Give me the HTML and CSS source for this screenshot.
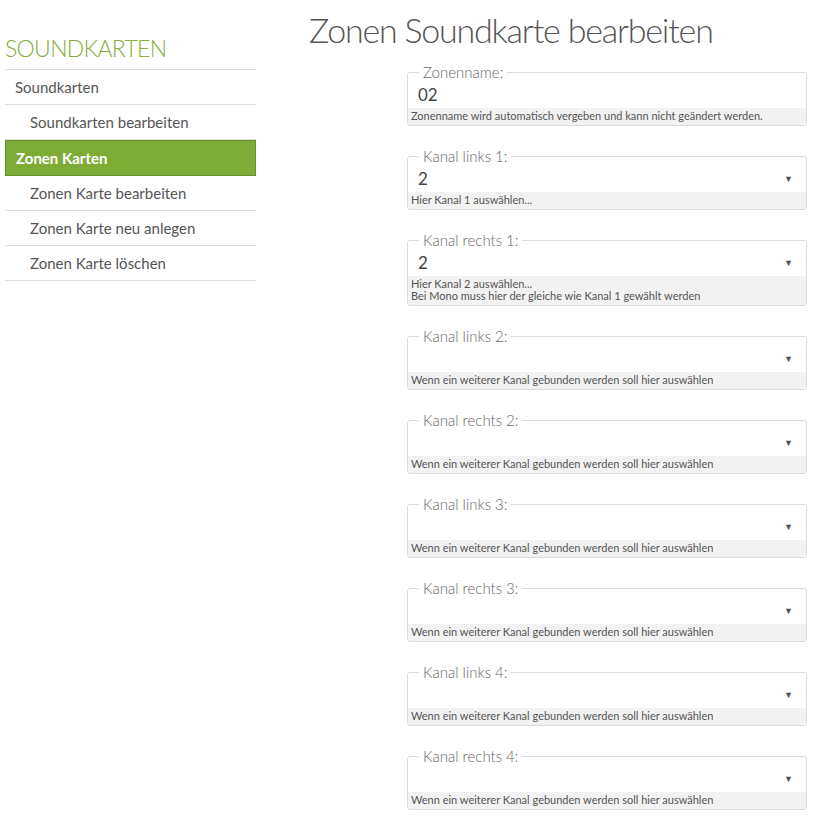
FILE: index.html
```html
<!DOCTYPE html>
<html lang="de">
<head>
<meta charset="utf-8">
<title>Zonen Soundkarte bearbeiten</title>
<link rel="stylesheet" href="styles.css">
</head>
<body>
<div class="page">
  <aside class="sidebar">
    <h2 class="side-title">SOUNDKARTEN</h2>
    <ul class="menu">
      <li class="item">Soundkarten</li>
      <li class="item sub">Soundkarten bearbeiten</li>
      <li class="item active">Zonen Karten</li>
      <li class="item sub">Zonen Karte bearbeiten</li>
      <li class="item sub">Zonen Karte neu anlegen</li>
      <li class="item sub">Zonen Karte löschen</li>
    </ul>
  </aside>
  <main class="main">
    <h1 class="title">Zonen Soundkarte bearbeiten</h1>
    <form class="form">
      <fieldset class="field">
        <legend>Zonenname:</legend>
        <div class="value">02</div>
        <div class="help">Zonenname wird automatisch vergeben und kann nicht geändert werden.</div>
      </fieldset>
      <fieldset class="field">
        <legend>Kanal links 1:</legend>
        <div class="value select">2<span class="arrow">▼</span></div>
        <div class="help">Hier Kanal 1 auswählen...</div>
      </fieldset>
      <fieldset class="field">
        <legend>Kanal rechts 1:</legend>
        <div class="value select">2<span class="arrow">▼</span></div>
        <div class="help">Hier Kanal 2 auswählen...<br>Bei Mono muss hier der gleiche wie Kanal 1 gewählt werden</div>
      </fieldset>
      <fieldset class="field">
        <legend>Kanal links 2:</legend>
        <div class="value select"><span class="arrow">▼</span></div>
        <div class="help">Wenn ein weiterer Kanal gebunden werden soll hier auswählen</div>
      </fieldset>
      <fieldset class="field">
        <legend>Kanal rechts 2:</legend>
        <div class="value select"><span class="arrow">▼</span></div>
        <div class="help">Wenn ein weiterer Kanal gebunden werden soll hier auswählen</div>
      </fieldset>
      <fieldset class="field">
        <legend>Kanal links 3:</legend>
        <div class="value select"><span class="arrow">▼</span></div>
        <div class="help">Wenn ein weiterer Kanal gebunden werden soll hier auswählen</div>
      </fieldset>
      <fieldset class="field">
        <legend>Kanal rechts 3:</legend>
        <div class="value select"><span class="arrow">▼</span></div>
        <div class="help">Wenn ein weiterer Kanal gebunden werden soll hier auswählen</div>
      </fieldset>
      <fieldset class="field">
        <legend>Kanal links 4:</legend>
        <div class="value select"><span class="arrow">▼</span></div>
        <div class="help">Wenn ein weiterer Kanal gebunden werden soll hier auswählen</div>
      </fieldset>
      <fieldset class="field">
        <legend>Kanal rechts 4:</legend>
        <div class="value select"><span class="arrow">▼</span></div>
        <div class="help">Wenn ein weiterer Kanal gebunden werden soll hier auswählen</div>
      </fieldset>
    </form>
  </main>
</div>
</body>
</html>
```

FILE: styles.css
```css
* { box-sizing: border-box; }
html, body { margin: 0; padding: 0; background: #fff; }
body {
  font-family: Lato, "Open Sans", "Liberation Sans", sans-serif;
  color: #555;
}
.page {
  display: flex;
  align-items: flex-start;
}
.sidebar {
  width: 256px;
  padding-left: 5px;
  flex: none;
}
.side-title {
  margin: 27px 0 0;
  font-size: 23px;
  font-weight: 300;
  line-height: 42px;
  color: #86ad3b;
  letter-spacing: -0.7px;
}
.menu {
  list-style: none;
  margin: 0;
  padding: 0;
  border-top: 1px solid #ddd;
}
.item {
  height: 35px;
  line-height: 34px;
  font-size: 15px;
  font-weight: 400;
  color: #555;
  padding-left: 10px;
  border-bottom: 1px solid #ddd;
}
.item.sub { padding-left: 25px; }
.item.active {
  height: 36px;
  background: #7dab35;
  border: 1px solid #65912a;
  color: #fff;
  font-weight: 700;
  padding-left: 10px;
  line-height: 34px;
}
.main {
  margin-left: 53px;
  flex: 1;
}
.title {
  margin: 8px 0 0;
  font-size: 34px;
  font-weight: 300;
  line-height: 44px;
  color: #555;
  letter-spacing: -1.2px;
}
.form {
  margin-left: 98px;
  width: 400px;
  padding-top: 11px;
}
.field {
  margin: 0 0 21px;
  padding: 0;
  border: 1px solid #ddd;
  border-radius: 3px;
  min-width: 0;
}
.field legend {
  margin-left: 11px;
  padding: 0 4px;
  font-size: 15px;
  font-weight: 300;
  line-height: 18px;
  color: #666;
}
.value {
  height: 27px;
  line-height: 24px;
  font-size: 17px;
  color: #444;
  padding-left: 10px;
  display: flex;
  align-items: center;
}
.select { justify-content: space-between; padding-right: 13px; }
.arrow {
  margin-left: auto;
  font-size: 9px;
  color: #555;
  line-height: 10px;
}
.help {
  background: #f2f2f2;
  padding: 2px 3px 3px;
  font-size: 11px;
  line-height: 12px;
  color: #555;
  border-radius: 0 0 3px 3px;
}
```
